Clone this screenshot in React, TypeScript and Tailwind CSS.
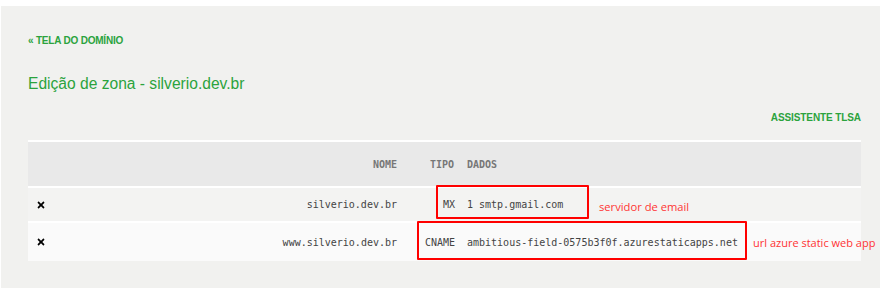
import React from "react";
import { FaTimes } from "react-icons/fa";

const records = [
  { nome: "silverio.dev.br", tipo: "MX", dados: "1 smtp.gmail.com", h: "h-[35px]", bg: "bg-[#f3f3f2]" },
  { nome: "www.silverio.dev.br", tipo: "CNAME", dados: "ambitious-field-0575b3f0f.azurestaticapps.net", h: "h-[39px]", bg: "bg-[#fafafa]" },
];

const App = () => {
  return (
    <div className="w-[880px] h-[288px] bg-white pt-[6px] pl-px overflow-hidden">
      <div className="relative h-full bg-[#f1f1ef] pl-[27px] pr-[19px] pt-[29px] font-['Liberation_Sans',Arial,sans-serif]">
        {/* Back link */}
        <a className="block text-[10px] leading-[12px] font-bold text-[#2ba33d] tracking-[-0.2px]">
          « TELA DO DOMÍNIO
        </a>

        <h1 className="mt-[27px] text-[15.6px] leading-[20px] text-[#2ba33d]">
          Edição de zona - silverio.dev.br
        </h1>

        <div className="mt-[18px] text-right text-[10px] leading-[12px] font-bold text-[#2ba33d] tracking-[-0.1px]">
          ASSISTENTE TLSA
        </div>

        {/* Zone records */}
        <table className="mt-[16px] w-full border-collapse font-['DejaVu_Sans_Mono',monospace] text-[10px]">
          <thead>
            <tr className="h-[46px] bg-[#e9e9e9] border-t-2 border-white">
              <th className="w-[20px]"></th>
              <th className="text-right font-bold text-[#777] pr-[6px]">NOME</th>
              <th className="w-[58px] text-right font-bold text-[#777] pr-[7px]">TIPO</th>
              <th className="w-[400px] text-left font-bold text-[#777] pl-[6px]">DADOS</th>
            </tr>
          </thead>
          <tbody>
            {records.map((r) => (
              <tr key={r.nome} className={`${r.h} ${r.bg} border-t-2 border-white`}>
                <td className="pl-[8px] align-middle">
                  <FaTimes className="w-[10px] h-[10px] text-black" />
                </td>
                <td className="text-right text-[#444] pr-[6px]">{r.nome}</td>
                <td className="text-right text-[#444] pr-[6px]">{r.tipo}</td>
                <td className="text-left text-[#444] pl-[6px]">{r.dados}</td>
              </tr>
            ))}
          </tbody>
        </table>

        {/* Annotations */}
        <div className="absolute left-[435px] top-[179px] w-[153px] h-[34px] border-2 border-[#ff0000] rounded-[1px]"></div>
        <div className="absolute left-[416px] top-[215px] w-[330px] h-[39px] border-2 border-[#ff0000] rounded-[1px]"></div>
        <div className="absolute left-[598px] top-[193px] whitespace-nowrap text-[11.2px] text-[#ff3333] font-['Open_Sans',sans-serif]">
          servidor de email
        </div>
        <div className="absolute left-[752px] top-[229px] whitespace-nowrap text-[11px] text-[#ff3333] font-['Open_Sans',sans-serif]">
          url azure static web app
        </div>
      </div>
    </div>
  );
};

export default App;
